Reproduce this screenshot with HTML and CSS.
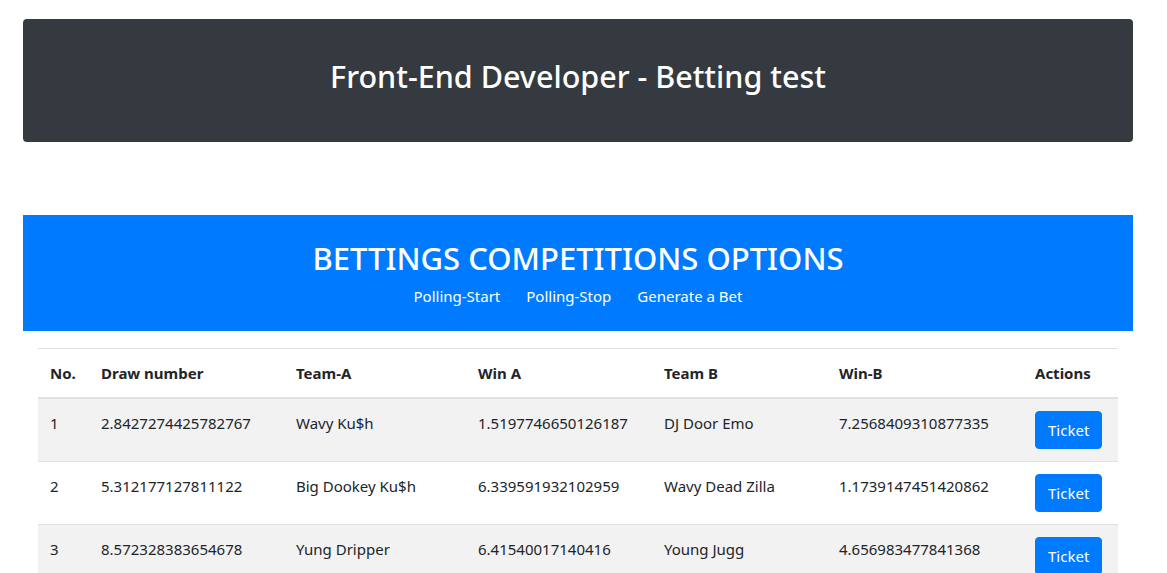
FILE: index.html
```html
<!DOCTYPE html>
<html lang="en">
<head>
<meta charset="utf-8">
<title>Front-End Developer - Betting test</title>
<link rel="stylesheet" href="styles.css">
</head>
<body>
<div class="container">
  <header class="hero">
    <h2 class="hero-title">Front-End Developer - Betting test</h2>
  </header>
  <section class="options">
    <h2 class="options-title">BETTINGS COMPETITIONS OPTIONS</h2>
    <nav class="options-nav">
      <a href="#" class="nav-link">Polling-Start</a>
      <a href="#" class="nav-link">Polling-Stop</a>
      <a href="#" class="nav-link">Generate a Bet</a>
    </nav>
  </section>
  <div class="table-wrap">
    <table class="bets">
      <colgroup>
        <col class="c1"><col class="c2"><col class="c3"><col class="c4"><col class="c5"><col class="c6"><col class="c7">
      </colgroup>
      <thead>
        <tr>
          <th>No.</th><th>Draw number</th><th>Team-A</th><th>Win A</th><th>Team B</th><th>Win-B</th><th>Actions</th>
        </tr>
      </thead>
      <tbody>
        <tr>
          <td>1</td><td>2.8427274425782767</td><td>Wavy Ku$h</td><td>1.5197746650126187</td><td>DJ Door Emo</td><td>7.2568409310877335</td><td><button class="btn">Ticket</button></td>
        </tr>
        <tr>
          <td>2</td><td>5.312177127811122</td><td>Big Dookey Ku$h</td><td>6.339591932102959</td><td>Wavy Dead Zilla</td><td>1.1739147451420862</td><td><button class="btn">Ticket</button></td>
        </tr>
        <tr>
          <td>3</td><td>8.572328383654678</td><td>Yung Dripper</td><td>6.41540017140416</td><td>Young Jugg</td><td>4.656983477841368</td><td><button class="btn">Ticket</button></td>
        </tr>
      </tbody>
    </table>
  </div>
</div>
</body>
</html>
```

FILE: styles.css
```css
* { box-sizing: border-box; }
html, body { margin: 0; padding: 0; }
body {
  font-family: "Noto Sans", "Open Sans", sans-serif;
  font-size: 15px;
  line-height: 24px;
  color: #212529;
  background: #fff;
}
.container {
  width: 1110px;
  margin-left: 23px;
  padding-top: 19px;
}
.hero {
  background: #343a40;
  border-radius: 4px;
  padding: 38px 16px 39px;
  text-align: center;
}
.hero-title {
  margin: 0 0 8px;
  font-size: 30.5px;
  line-height: 38px;
  font-weight: 500;
  color: #fff;
}
.options {
  margin-top: 73px;
  background: #007bff;
  padding: 24px 16px 23px;
  text-align: center;
}
.options-title {
  margin: 0 0 7px;
  font-size: 31px;
  line-height: 38px;
  font-weight: 500;
  color: #fff;
}
.options-nav {
  display: flex;
  justify-content: center;
  gap: 26px;
}
.nav-link {
  color: #fff;
  text-decoration: none;
  font-size: 15px;
  line-height: 24px;
}
.table-wrap {
  padding: 17px 15px 0;
}
.bets {
  width: 1080px;
  border-collapse: collapse;
  table-layout: fixed;
}
.c1 { width: 51px; }
.c2 { width: 195px; }
.c3 { width: 182px; }
.c4 { width: 186px; }
.c5 { width: 175px; }
.c6 { width: 196px; }
.c7 { width: 95px; }
.bets th, .bets td {
  padding: 12px;
  text-align: left;
  vertical-align: top;
  border-top: 1px solid #dee2e6;
  white-space: nowrap;
}
.bets th {
  font-weight: 700;
  border-bottom: 2px solid #dee2e6;
}
.bets tbody tr:nth-child(odd) { background: #f2f2f2; }
.btn {
  font-family: inherit;
  font-size: 15px;
  line-height: 24px;
  padding: 6px 12px;
  color: #fff;
  background: #007bff;
  border: 1px solid #007bff;
  border-radius: 4px;
  cursor: pointer;
}
```
